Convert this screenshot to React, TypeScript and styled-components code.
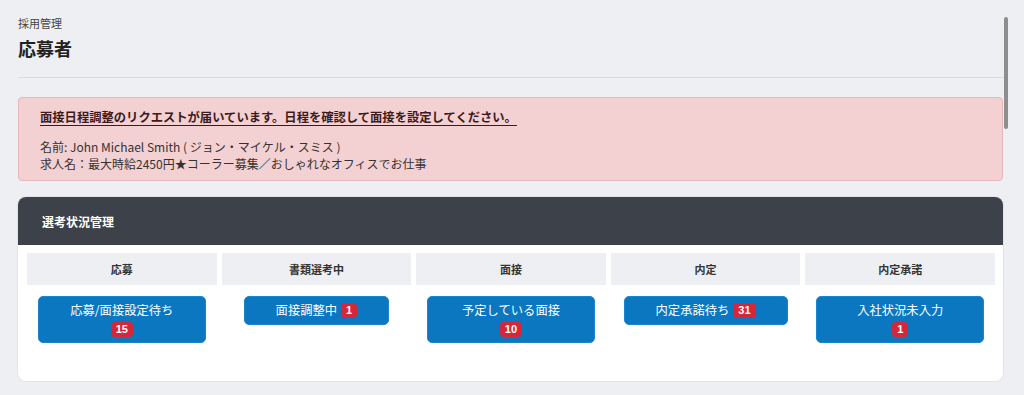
import React from "react";
import styled, { createGlobalStyle } from "styled-components";

const GlobalStyle = createGlobalStyle`
  html, body {
    margin: 0;
    padding: 0;
    background: #eeeff3;
    font-family: "Noto Sans CJK JP", "Noto Sans", sans-serif;
    color: #222;
  }
  * { box-sizing: border-box; }
`;

const Page = styled.div`
  padding: 16px 21px 20px 18px;
`;

const Breadcrumb = styled.div`
  font-size: 11px;
  line-height: 14px;
  color: #444;
`;

const Title = styled.h1`
  margin: 6px 0 0;
  font-size: 18px;
  line-height: 24px;
  font-weight: 700;
  color: #222;
`;

const Divider = styled.hr`
  margin: 17px -1px 0 0;
  border: 0;
  height: 1px;
  background: #dadbdf;
`;

const Alert = styled.div`
  margin-top: 19px;
  background: #f3d0d1;
  border: 1px solid #e8b7ba;
  border-radius: 4px;
  padding: 10px 21px 8px;
`;

const AlertTitle = styled.div`
  font-size: 12.3px;
  line-height: 18px;
  font-weight: 700;
  color: #3d1a1c;
  text-decoration: underline;
  text-underline-offset: 3px;
  margin-bottom: 12px;
`;

const AlertLine = styled.div`
  font-size: 12px;
  line-height: 17px;
  color: #333;
`;

const Card = styled.section`
  margin-top: 16px;
  background: #fff;
  border-radius: 8px;
  overflow: hidden;
  box-shadow: 0 0 0 1px #e2e3e7;
`;

const CardHeader = styled.div`
  height: 48px;
  display: flex;
  align-items: center;
  padding: 0 24px;
  background: #3d4149;
  color: #fff;
  font-size: 12px;
  font-weight: 700;
`;

const Board = styled.div`
  display: grid;
  grid-template-columns: repeat(5, 1fr);
  column-gap: 5px;
  padding: 8px 8px 38px 9px;
`;

const Column = styled.div`
  display: flex;
  flex-direction: column;
  align-items: center;
`;

const ColumnHead = styled.div`
  align-self: stretch;
  height: 32px;
  display: flex;
  align-items: center;
  justify-content: center;
  background: #eeeff3;
  font-size: 11px;
  font-weight: 700;
  color: #333;
`;

const StatusButton = styled.button<{ $stacked?: boolean }>`
  margin-top: 11px;
  align-self: ${(p) => (p.$stacked ? "stretch" : "center")};
  margin-left: ${(p) => (p.$stacked ? "11px" : "0")};
  margin-right: ${(p) => (p.$stacked ? "11px" : "0")};
  display: flex;
  flex-direction: ${(p) => (p.$stacked ? "column" : "row")};
  align-items: center;
  justify-content: center;
  gap: ${(p) => (p.$stacked ? "3px" : "4px")};
  padding: ${(p) => (p.$stacked ? "5px 10px 5px" : "5px 31px")};
  border: 1px solid #1a86cc;
  border-radius: 5px;
  background: #0a77c0;
  color: #fff;
  font-family: inherit;
  font-size: 12.3px;
  line-height: 17px;
  cursor: pointer;
`;

const Badge = styled.span`
  display: inline-flex;
  align-items: center;
  justify-content: center;
  min-width: 16px;
  height: 15px;
  padding: 0 5px;
  border-radius: 4px;
  background: #d4283a;
  color: #fff;
  font-family: "Liberation Sans", Arial, sans-serif;
  font-size: 11px;
  line-height: 15px;
  font-weight: 700;
`;

const ScrollThumb = styled.div`
  position: fixed;
  top: 17px;
  right: 16px;
  width: 4px;
  height: 112px;
  border-radius: 2px;
  background: #8e8e8e;
`;

const columns = [
  { head: "応募", label: "応募/面接設定待ち", count: 15, stacked: true },
  { head: "書類選考中", label: "面接調整中", count: 1, stacked: false },
  { head: "面接", label: "予定している面接", count: 10, stacked: true },
  { head: "内定", label: "内定承諾待ち", count: 31, stacked: false },
  { head: "内定承諾", label: "入社状況未入力", count: 1, stacked: true },
];

export default function App() {
  return (
    <>
      <GlobalStyle />
      <Page>
        <Breadcrumb>採用管理</Breadcrumb>
        <Title>応募者</Title>
        <Divider />
        <Alert>
          <AlertTitle>
            面接日程調整のリクエストが届いています。日程を確認して面接を設定してください。
          </AlertTitle>
          <AlertLine>名前: John Michael Smith ( ジョン・マイケル・スミス )</AlertLine>
          <AlertLine>求人名：最大時給2450円★コーラー募集／おしゃれなオフィスでお仕事</AlertLine>
        </Alert>
        <Card>
          <CardHeader>選考状況管理</CardHeader>
          <Board>
            {columns.map((c) => (
              <Column key={c.head}>
                <ColumnHead>{c.head}</ColumnHead>
                <StatusButton $stacked={c.stacked}>
                  <span>{c.label}</span>
                  <Badge>{c.count}</Badge>
                </StatusButton>
              </Column>
            ))}
          </Board>
        </Card>
      </Page>
      <ScrollThumb />
    </>
  );
}
